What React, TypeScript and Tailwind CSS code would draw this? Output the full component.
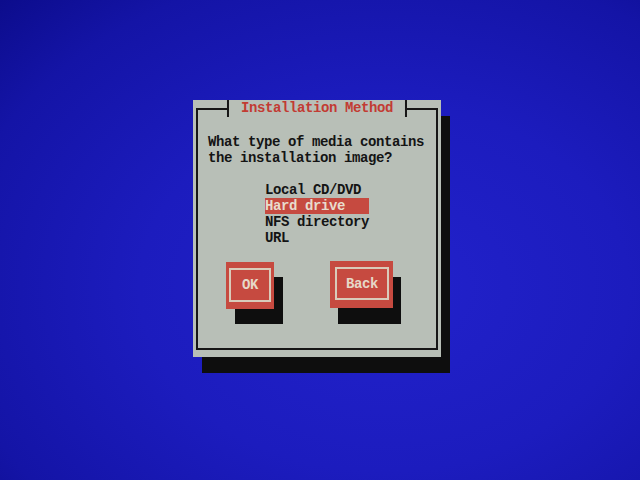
import React from "react";

export default function App() {
  const mono = "font-['Liberation_Mono','DejaVu_Sans_Mono',monospace] font-bold text-[14px] leading-[16px] tracking-[-0.4px]";
  const items = ["Local CD/DVD", "Hard drive", "NFS directory", "URL"];
  return (
    <div className="w-[640px] h-[480px] overflow-hidden bg-[#1b1bbd] bg-[radial-gradient(ellipse_at_60%_60%,#2222cc_0%,#1c1cbe_45%,#1414a6_80%,#0c0c8c_100%)] pt-[100px] pl-[193px]">
      <div className={`relative w-[248px] h-[257px] bg-[#b8bfb7] shadow-[9px_16px_0_#0e0e0e] pt-[8px] px-[3px] pb-[7px] ${mono}`}>
        <div className="relative h-full border-2 border-[#161616] pt-[24px] pl-[10px]">
          <div className="absolute top-[-10px] left-1/2 -translate-x-1/2 h-[17px] border-x-2 border-[#161616] bg-[#b8bfb7] px-[12px] text-[#c23b33] whitespace-nowrap">
            Installation Method
          </div>
          <div className="text-[#141414] whitespace-pre">
            <div>What type of media contains</div>
            <div>the installation image?</div>
          </div>
          <div className="mt-[16px] pl-[57px] flex flex-col">
            {items.map((it, i) => (
              <div
                key={it}
                className={
                  i === 1
                    ? "w-[104px] h-[16px] bg-[#c64a40] text-[#e8dccd] whitespace-pre"
                    : "w-[104px] h-[16px] text-[#141414] whitespace-pre"
                }
              >
                {it}
              </div>
            ))}
          </div>
          <div className="mt-[16px] pl-[18px] flex items-start gap-[56px]">
            <div className="w-[48px] h-[47px] bg-[#c64a40] shadow-[9px_15px_0_#0e0e0e] pt-[6px] px-[3px] pb-[7px]">
              <div className="h-full border-2 border-[#d9cbba] flex items-center justify-center text-[#e6d8c8]">
                OK
              </div>
            </div>
            <div className="w-[63px] h-[47px] -mt-[1px] bg-[#c64a40] shadow-[8px_16px_0_#0e0e0e] pt-[6px] pl-[5px] pr-[4px] pb-[8px]">
              <div className="h-full border-2 border-[#d9cbba] flex items-center justify-center text-[#e6d8c8]">
                Back
              </div>
            </div>
          </div>
        </div>
      </div>
    </div>
  );
}
